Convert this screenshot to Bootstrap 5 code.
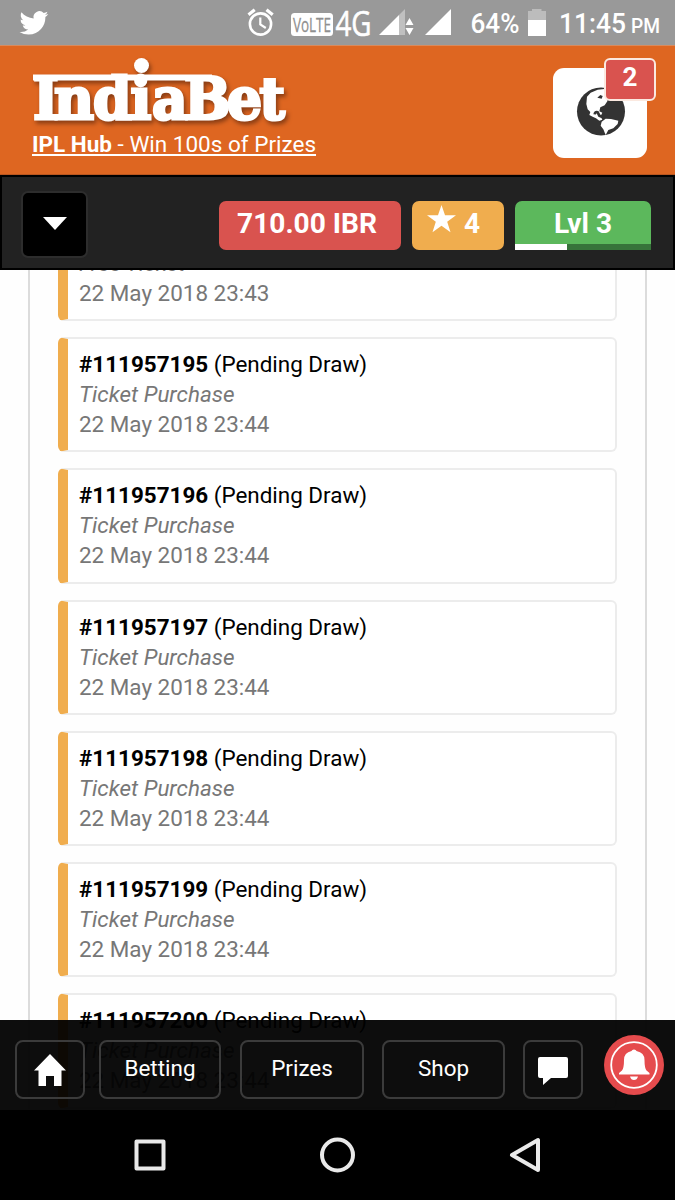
<!DOCTYPE html>
<html lang="en">
<head>
<meta charset="utf-8">
<meta name="viewport" content="width=device-width, initial-scale=1">
<title>IndiaBet</title>
<link href="https://cdn.jsdelivr.net/npm/bootstrap@5.3.0/dist/css/bootstrap.min.css" rel="stylesheet">
<style>
body{height:1200px;overflow:hidden;font-family:Roboto,"Liberation Sans",sans-serif;font-size:22.45px;line-height:30px;color:#000;background:#fefefe}
svg{display:block;flex:none}
.status-bar{height:45px;background:#999;color:#fff}
.brand-bar{height:130px;background:#de6621;border-top:1px solid #d98a5c;border-bottom:1px solid #b9561f;padding:0 28px 0 32px}
.brand-link{line-height:30px;font-size:22.5px;text-decoration-thickness:2px;text-underline-offset:2px}
.logo{filter:drop-shadow(2px 3px 2px #873c14)}
.globe-tile{width:94px;height:90px;border-radius:11px;margin:21.5px 0 0}
.count-tag{position:absolute;top:-10px;left:51px;width:52px;height:43px;border:2px solid #fbe9e0;border-radius:6px;background:#d9534f;font-size:26px;font-weight:700;line-height:35px}
.stat-bar{height:95px;background:#222;border:2px solid #000;padding:0 22px 0 19px}
.menu-btn{width:67px;height:67px;background:#000;border:2px solid #2d2d2d;border-radius:7px;margin-top:14px}
.pill{height:49px;border-radius:7px;color:#fff;font-weight:700;font-size:28.1px;line-height:46px;margin-top:23.5px}
.pill-coins{width:182px;background:#d9534f;margin-right:11px;padding-right:6px}
.pill-stars{width:92px;background:#f0ad4e;margin-right:11px;padding-right:9px}
.pill-level{width:136px;background:#5cb85c;border-radius:7px 7px 0 0;overflow:hidden}
.level-label{height:43px}
.level-track{height:6px;background:#37733a}
.level-fill{height:6px;background:#fff}
.ticket-area{overflow:hidden;padding:0 28px}
.ticket-panel{border:solid #dcdcdc;border-width:0 2px;padding:0 28.5px 0 28px;margin-top:-64.3px;background:#fefefe}
.ticket{height:115.3px;margin-bottom:16px;border:2px solid #ececec;border-left:10px solid #f0ad4e;border-radius:6px;background:#fff;padding:10px 11px 0}
.ticket p{margin:0}
.soft{color:#777}
.bottom-nav{height:90px;margin-top:-90px;z-index:2;background:rgba(0,0,0,.95);padding:20px 11px 0 15px}
.nav-btn{height:59px;border:2px solid #3b3b3b;border-radius:8px;color:#fff;line-height:53px;text-align:center;text-decoration:none}
.sys-nav{height:90px;background:#000}
</style>
<script src="https://cdn.jsdelivr.net/npm/bootstrap@5.3.0/dist/js/bootstrap.bundle.min.js"></script>
</head>
<body class="d-flex flex-column m-0">
<div class="status-bar flex-shrink-0">
<svg width="675" height="45" fill="#fff" font-family="Roboto, sans-serif">
<path transform="translate(19.5 8.5) scale(1.2)" d="M23.95 4.57a10 10 0 0 1-2.82.77 4.96 4.96 0 0 0 2.16-2.72c-.95.55-2 .96-3.12 1.18a4.92 4.92 0 0 0-8.38 4.48C7.69 8.1 4.07 6.13 1.64 3.16a4.92 4.92 0 0 0 1.52 6.57 4.9 4.9 0 0 1-2.23-.61v.06a4.92 4.92 0 0 0 3.95 4.83 5 5 0 0 1-2.21.08 4.94 4.94 0 0 0 4.6 3.42A9.87 9.87 0 0 1 0 19.54a13.94 13.94 0 0 0 7.55 2.21c9.05 0 14-7.5 14-13.98 0-.21 0-.42-.02-.63a9.94 9.94 0 0 0 2.42-2.57z"/>
<g fill="none" stroke="#fff"><circle cx="260.5" cy="24" r="10.6" stroke-width="2.6"/><path d="M260.3 17.5V24.5l5.5 3.5" stroke-width="2.2"/><path d="M248.5 14.8l6.2-5M272.7 14.8l-6.2-5" stroke-width="3.2"/></g>
<rect x="291" y="13" width="42" height="23" rx="3.5"/>
<text x="293" y="32.3" font-family="Open Sans" font-size="20.5" textLength="38" lengthAdjust="spacingAndGlyphs" fill="#8f8f8f" stroke="#8f8f8f" stroke-width=".3">VoLTE</text>
<text x="335.5" y="35.5" font-family="Open Sans" font-size="34" textLength="36" lengthAdjust="spacingAndGlyphs" stroke="#fff" stroke-width=".6">4G</text>
<path d="M379 35L399 15V35z"/><path d="M399 15L405 9V35H399z" opacity=".38"/>
<path d="M405.500 25l4-7 4 7zM405.500 28l4 7 4-7zM425 35L451 9V35z"/>
<text x="470.500" y="33" font-size="27.500" font-weight="500" textLength="49" lengthAdjust="spacingAndGlyphs">64%</text>
<path d="M528 11H532V9H541.500V11H546V20H528z" opacity=".35"/><path d="M528 20H546V36H528z"/>
<text x="559" y="33" font-size="27.500" font-weight="500" textLength="67" lengthAdjust="spacingAndGlyphs">11:45</text>
<text x="631" y="33" font-size="19.500" font-weight="500" textLength="29" lengthAdjust="spacingAndGlyphs">PM</text>
</svg>
</div>
<header class="brand-bar d-flex justify-content-between flex-shrink-0">
<div>
<svg class="logo" width="270" height="83" viewBox="32 46 270 83" fill="#fff">
<text transform="scale(.95 1)" y="119.500" x="34.700 56.800 97.900 137.400 160 193.700 239 273.200" font-family="DejaVu Serif" font-weight="700" font-size="58" stroke="#fff" stroke-width="3">IndiaBet</text>
<path d="M33 74.500H212V80.500H33z"/><circle cx="141.500" cy="65.500" r="7.500"/>
</svg>
<a class="brand-link text-white d-block" href="#"><b>IPL Hub</b> - Win 100s of Prizes</a>
</div>
<div class="globe-tile bg-white position-relative">
<svg width="94" height="90" viewBox="553 68 94 90"><circle cx="601" cy="111.500" r="24" fill="#333"/><g transform="translate(565 80) scale(.3333)"><path fill="#fff" d="M118 27L98 29 77 38 66 50 64 72 68 88 76 96 73 105 83 110 93 115 103 122 112 119 107 108 112 98 103 94 106 82 119 76 127 64 130 27z"/><path fill="#333" d="M97 53L106 45 113 48 110 56z"/><path d="M89 103Q90 94 98 97L103 107 112 111" fill="none" stroke="#333" stroke-width="8"/><path fill="#fff" d="M110 125L122 116 138 117 160 122 158 132 145 145 130 150 122 165 115 148 107 137z"/></g></svg>
<span class="count-tag text-white text-center">2</span>
</div>
</header>
<section class="stat-bar d-flex flex-shrink-0">
<button class="menu-btn p-0 me-auto d-flex justify-content-center align-items-center" aria-label="Menu"><svg width="26" height="16"><path d="M1 0H25L13 13z" fill="#fff"/></svg></button>
<div class="pill pill-coins text-center">710.00 IBR</div>
<div class="pill pill-stars d-flex justify-content-center"><svg width="29" height="28" viewBox="0 0 28 27" class="me-2 mt-1"><path fill="#fff" d="M14 0l3.400 9.800H28l-8.500 6.300 3.200 10.200L14 20l-8.700 6.300 3.200-10.200L0 9.800h10.600z"/></svg>4</div>
<div class="pill pill-level text-center"><div class="level-label">Lvl 3</div><div class="level-track"><div class="level-fill" style="width:38%"></div></div></div>
</section>
<main class="ticket-area flex-grow-1">
<div class="ticket-panel">
<div class="ticket"><p><b>#111957194</b> (Pending Draw)</p><p class="soft fst-italic">Free Ticket</p><p class="soft">22 May 2018 23:43</p></div>
<div class="ticket"><p><b>#111957195</b> (Pending Draw)</p><p class="soft fst-italic">Ticket Purchase</p><p class="soft">22 May 2018 23:44</p></div>
<div class="ticket"><p><b>#111957196</b> (Pending Draw)</p><p class="soft fst-italic">Ticket Purchase</p><p class="soft">22 May 2018 23:44</p></div>
<div class="ticket"><p><b>#111957197</b> (Pending Draw)</p><p class="soft fst-italic">Ticket Purchase</p><p class="soft">22 May 2018 23:44</p></div>
<div class="ticket"><p><b>#111957198</b> (Pending Draw)</p><p class="soft fst-italic">Ticket Purchase</p><p class="soft">22 May 2018 23:44</p></div>
<div class="ticket"><p><b>#111957199</b> (Pending Draw)</p><p class="soft fst-italic">Ticket Purchase</p><p class="soft">22 May 2018 23:44</p></div>
<div class="ticket"><p><b>#111957200</b> (Pending Draw)</p><p class="soft fst-italic">Ticket Purchase</p><p class="soft">22 May 2018 23:44</p></div>
</div>
</main>
<nav class="bottom-nav d-flex flex-shrink-0 position-relative">
<a class="nav-btn d-flex justify-content-center" style="width:70px;margin-right:14px" href="#" aria-label="Home"><svg width="34" height="34" style="margin-top:11px"><path fill="#fff" d="M17 1L33 17.500H28.500V33H21V23H13V33H5.500V17.500H1z"/></svg></a>
<a class="nav-btn" style="width:122px;margin-right:19px" href="#">Betting</a>
<a class="nav-btn" style="width:124px;margin-right:18px" href="#">Prizes</a>
<a class="nav-btn" style="width:123px;margin-right:18px" href="#">Shop</a>
<a class="nav-btn d-flex justify-content-center" style="width:60px" href="#" aria-label="Chat"><svg width="32" height="28" style="margin-top:15px"><path fill="#fff" d="M3 0H29Q31 0 31 2V19Q31 21 29 21H14L6 28V21H3Q1 21 1 19V2Q1 0 3 0z"/></svg></a>
<svg class="ms-auto" width="60" height="60" style="margin-top:-5px"><circle cx="30" cy="30" r="30" fill="#e54b4d"/><circle cx="30" cy="30" r="22.800" fill="none" stroke="#fff" stroke-width="1.800"/><path fill="#fff" d="M30 14.500q2 0 2.500 1.500Q40.500 17.500 40.500 25q0 8 2 10.500l3 2.500v1.500H15V38l3-2.500Q20 33 20 25q0-7.500 7.500-9 .5-1.500 2.500-1.500zM26 41.500h8q-1 3.500-4 3.500t-4-3.500z"/></svg>
</nav>
<footer class="sys-nav flex-shrink-0"><svg width="675" height="90" fill="none" stroke="#e9e9e9" stroke-width="4" stroke-linejoin="round"><path d="M136.500 31.500H163.500V58.500H136.500zM512 45L538 30V60z" /><circle cx="337.500" cy="45" r="15.500"/></svg></footer>
</body>
</html>
